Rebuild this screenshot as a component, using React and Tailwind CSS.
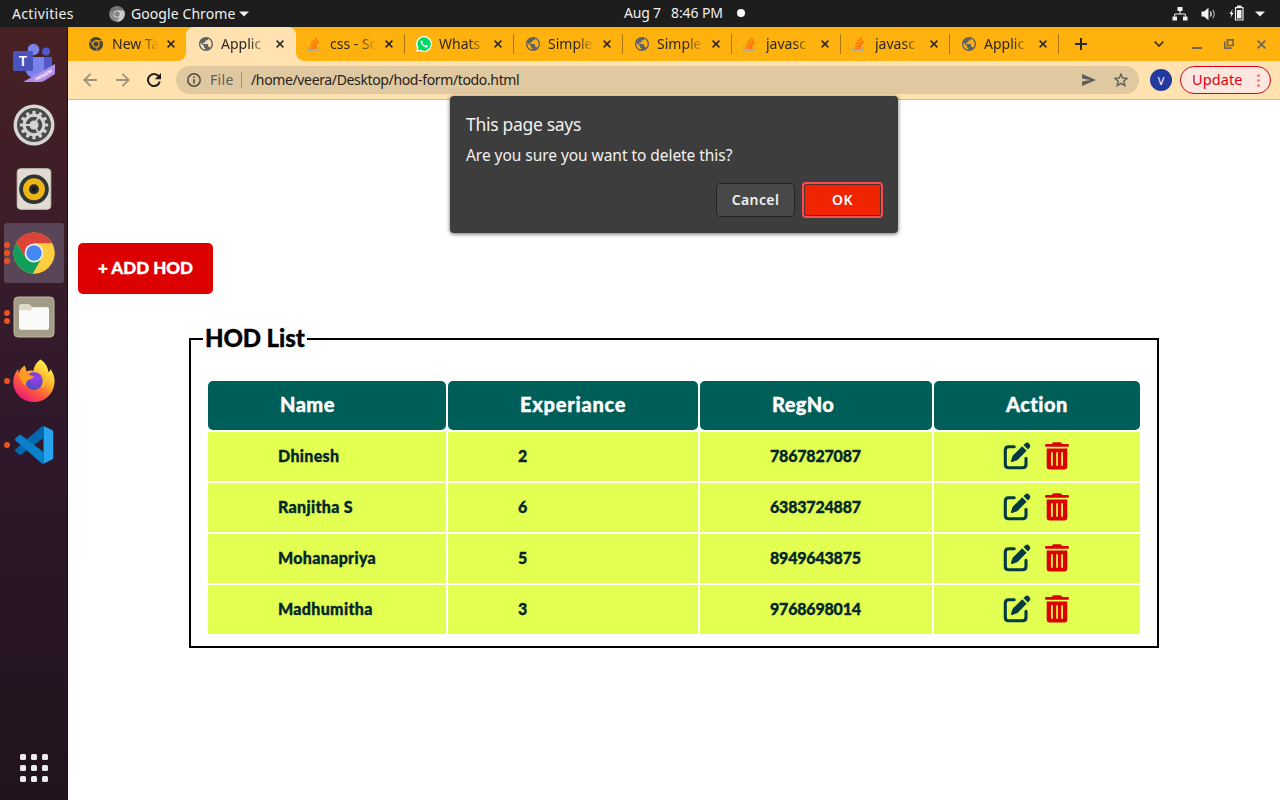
import React from "react";

const UI = "font-['Noto_Sans',sans-serif]";
const HEAVY = "font-['Lato',sans-serif] font-black [font-variant-ligatures:none] [-webkit-text-stroke:0.35px_currentColor]";

/* ---------- small icons ---------- */

function GlobeIcon() {
  return (
    <svg width="14" height="14" viewBox="2 2 20 20" className="block shrink-0">
      <path d="M12 2C6.48 2 2 6.48 2 12s4.48 10 10 10 10-4.48 10-10S17.52 2 12 2zm-1 17.93c-3.95-.49-7-3.85-7-7.93 0-.62.08-1.21.21-1.79L9 15v1c0 1.1.9 2 2 2v1.93zm6.9-2.54c-.26-.81-1-1.39-1.9-1.39h-1v-3c0-.55-.45-1-1-1H8v-2h2c.55 0 1-.45 1-1V7h2c1.1 0 2-.9 2-2v-.41c2.93 1.19 5 4.06 5 7.41 0 2.08-.8 3.97-2.1 5.39z" fill="#5f6368" />
    </svg>
  );
}

function ChromeMono({ size, outer, inner, gap }) {
  return (
    <svg width={size} height={size} viewBox="0 0 16 16" className="block shrink-0">
      <circle cx="8" cy="8" r="8" fill={outer} />
      <circle cx="8" cy="8" r="4.2" fill={gap} />
      <circle cx="8" cy="8" r="2.9" fill={inner} />
      <path d="M8 4.2 H15.2 M4.7 9.9 L1.1 3.7 M11.3 9.9 L7.7 16" stroke={gap} strokeWidth="1" fill="none" />
    </svg>
  );
}

function ChromeGrey() {
  return (
    <svg width="16" height="16" viewBox="0 0 16 16" className="block shrink-0">
      <circle cx="8" cy="8" r="7.8" fill="#8b8b8b" />
      <path d="M1.2 4.2 A7.8 7.8 0 0 1 14.9 4.4 H8 L4.8 9.8 Z" fill="#757575" />
      <path d="M14.9 4.4 A7.8 7.8 0 0 1 7.6 15.8 L11.1 9.9 L8 4.4 Z" fill="#c9c9c9" />
      <circle cx="8" cy="8" r="3.6" fill="#e2e2e2" />
      <circle cx="8" cy="8" r="2.8" fill="#858585" />
    </svg>
  );
}

function StackIcon() {
  return (
    <svg width="14" height="16" viewBox="0 0 14 16" className="block shrink-0">
      <path d="M1 10.5 V14.3 H10.8 V10.5" fill="none" stroke="#b5a68e" strokeWidth="1.3" />
      <path d="M2.8 12.2 H9.2 M3 9.6 L9.3 10.9 M3.9 6.7 L9.7 9.4 M5.6 4 L10.5 8.1 M8 1.8 L11.6 7" fill="none" stroke="#ff6a0a" strokeWidth="1.3" />
    </svg>
  );
}

function WhatsIcon() {
  return (
    <svg width="16" height="16" viewBox="0 0 16 16" className="block shrink-0">
      <path d="M8 0 a8 8 0 1 1 -3.7 15.1 L0 16 L1 11.9 A8 8 0 0 1 8 0 Z" fill="#fff" />
      <path d="M8 1.3 a6.7 6.7 0 1 1 -3.4 12.4 L1.9 14.3 L2.6 11.7 A6.7 6.7 0 0 1 8 1.3 Z" fill="#00d95f" />
      <path d="M5.5 4.2 C4.2 4.6 4.1 6.3 5.6 8.3 C7.4 10.8 9.6 12 11.1 11.2 C12 10.7 12 9.8 11.8 9.6 L10.1 8.8 L9.2 9.8 C8 9.4 6.9 8.4 6.3 7.2 L6.9 6.3 L6.2 4.5 Z" fill="#fff" />
    </svg>
  );
}

function Cross({ size = 8, color = "#282828" }) {
  return (
    <svg width={size} height={size} viewBox="0 0 8 8" className="block shrink-0">
      <path d="M0.6 0.6 L7.4 7.4 M7.4 0.6 L0.6 7.4" stroke={color} strokeWidth="1.5" />
    </svg>
  );
}

function EditIcon() {
  return (
    <svg width="28" height="28" viewBox="0 0 28 28" className="block">
      <path d="M11.2 4.8 H5.6 Q2.3 4.8 2.3 8.2 V22.2 Q2.3 25.8 5.6 25.8 H19.6 Q23 25.8 23 22.2 V16.2" fill="none" stroke="#023b43" strokeWidth="3.1" strokeLinecap="round" />
      <path d="M19.2 4.2 L23.6 8.8 L15 17.4 Q14.2 18.2 13.2 18.6 L9.2 20 Q7.5 20.4 8 18.7 L9.4 14.6 Q9.8 13.5 10.6 12.8 Z" fill="#023b43" />
      <path d="M20.5 3 L22.2 1.4 Q24.2 -0.3 26.2 1.7 Q28.1 3.8 26.5 5.7 L24.8 7.5 Z" fill="#023b43" />
    </svg>
  );
}

function TrashIcon() {
  return (
    <svg width="24" height="28" viewBox="0 0 24 28" className="block">
      <path d="M1.3 2 H6.6 L7.6 0.9 Q8 0.3 8.8 0.3 H15.2 Q16 0.3 16.4 0.9 L17.4 2 H22.7 Q24 2 24 3.4 Q24 4.8 22.7 4.8 H1.3 Q0 4.8 0 3.4 Q0 2 1.3 2 Z" fill="#dc0000" />
      <path fillRule="evenodd" d="M1.7 6.6 H22.3 V24.6 Q22.3 27.5 19.4 27.5 H4.6 Q1.7 27.5 1.7 24.6 Z M6.1 10.2 V23.8 H7.8 V10.2 Z M11.2 10.2 V23.8 H12.9 V10.2 Z M16.2 10.2 V23.8 H17.9 V10.2 Z" fill="#dc0000" />
    </svg>
  );
}

/* ---------- dock icons ---------- */

function TeamsIcon() {
  return (
    <svg width="42" height="42" viewBox="0 0 42 42">
      <circle cx="20.5" cy="9.5" r="5.8" fill="#7b83eb" />
      <circle cx="33" cy="11.5" r="4" fill="#5059c9" />
      <path d="M28 17 H39 V28 Q37 34 30 33 Z" fill="#5059c9" />
      <path d="M12 17 H31 V30 Q29 38 20 38 Q13 36 12 28 Z" fill="#7b83eb" />
      <rect x="0" y="11" width="20" height="20" rx="1.8" fill="#4b53bc" />
      <text x="10" y="26.3" textAnchor="middle" fontFamily="Noto Sans, sans-serif" fontWeight="600" fontSize="14.5" fill="#fff">T</text>
      <path d="M10 42 L42 24 V34 L31 41 Q29 42 26 42 Z" fill="#b18fe8" />
      <text x="0" y="0" transform="translate(23.5 41) rotate(-30)" fontFamily="Noto Sans, sans-serif" fontWeight="700" fontSize="4.2" fill="#fff">PREVIEW</text>
    </svg>
  );
}

const teeth = Array.from({ length: 12 }, (_, i) => i * 30);

function SettingsIcon() {
  return (
    <svg width="42" height="42" viewBox="0 0 42 42">
      <circle cx="21" cy="21" r="20.5" fill="#d6d6d4" />
      <circle cx="21" cy="21" r="17" fill="#4a4a49" />
      {teeth.map((a) => (
        <rect key={a} x="19.4" y="6.8" width="3.2" height="5" rx="0.8" fill="#d4d4d2" transform={`rotate(${a} 21 21)`} />
      ))}
      <circle cx="21" cy="21" r="9.8" fill="none" stroke="#d4d4d2" strokeWidth="3" />
      <circle cx="21" cy="21" r="4.6" fill="#d4d4d2" />
      <path d="M21 21 L11.5 21 M21 21 L25.8 12.8 M21 21 L25.8 29.2" stroke="#d4d4d2" strokeWidth="1.8" />
    </svg>
  );
}

function RhythmboxIcon() {
  return (
    <svg width="42" height="42" viewBox="0 0 42 42">
      <rect x="4.2" y="0.7" width="33.6" height="40.6" rx="3.5" fill="#e0dcd1" stroke="#c8c3b7" />
      <circle cx="21" cy="21.2" r="14.8" fill="#2e3536" />
      <circle cx="21" cy="21.2" r="11" fill="#eeb514" />
      <circle cx="21" cy="21.2" r="5" fill="#2b2d2d" />
      <circle cx="21" cy="21.2" r="2.2" fill="#161616" />
    </svg>
  );
}

function ChromeIcon() {
  return (
    <svg width="42" height="42" viewBox="0 0 42 42">
      <circle cx="21" cy="21" r="20.5" fill="#ffcd40" />
      <path d="M3.2 10.8 A20.5 20.5 0 0 1 39.2 11.6 H21 L12.5 25.5 Z" fill="#dc4437" />
      <path d="M3.2 10.8 A20.5 20.5 0 0 0 20 41.4 L28.8 26 L20 21 L12.6 25.6 Z" fill="#119e5a" />
      <path d="M39.2 11.6 A20.5 20.5 0 0 1 20 41.5 L29.2 25.5 L21 11.6 Z" fill="#ffcd40" />
      <circle cx="21" cy="21" r="9.4" fill="#f1f1f1" />
      <circle cx="21" cy="21" r="7.7" fill="#4688f1" />
    </svg>
  );
}

function FilesIcon() {
  return (
    <svg width="42" height="42" viewBox="0 0 42 42">
      <rect x="1" y="1" width="40" height="40" rx="4" fill="#a39c87" stroke="#c0b9a5" strokeWidth="1" />
      <path d="M6 10.2 Q6 8 8.2 8 H15 Q17 8 18 9.6 L19.2 11.2 H34 Q36 11.2 36 13.2 V31.5 Q36 34 33.5 34 H8.5 Q6 34 6 31.5 Z" fill="#ded8c8" />
      <path d="M6 14.2 H17 Q19 14 20 11.2 H34 Q36 11.2 36 13.2 V31 Q36 33.5 33.5 33.5 H8.5 Q6 33.5 6 31 Z" fill="#fafaf8" />
    </svg>
  );
}

function FirefoxIcon() {
  return (
    <svg width="42" height="44" viewBox="0 0 42 44">
      <defs>
        <linearGradient id="ffBody" x1="0.85" y1="0.1" x2="0.25" y2="1">
          <stop offset="0" stopColor="#fff34f" />
          <stop offset="0.35" stopColor="#ffb52b" />
          <stop offset="0.65" stopColor="#ff5a3a" />
          <stop offset="1" stopColor="#e8167c" />
        </linearGradient>
        <radialGradient id="ffGlobe" cx="0.6" cy="0.35" r="0.7">
          <stop offset="0" stopColor="#a03cf0" />
          <stop offset="1" stopColor="#4650b8" />
        </radialGradient>
      </defs>
      <path d="M27.5 0.5 C33 4 35 9 35.5 13 C37 12.5 37.4 11 37.4 10 C41 15 42 20 41.5 24 C40.5 36 31 43 21 43 C9 43 0 34 0.3 22.5 C0.5 17 3 12.5 5.2 10 L5.6 14.2 C6.8 10.6 9.5 7.6 11.8 6.5 L13.6 12.6 C16 11.4 18.6 11.2 20.6 12 C20.6 7.2 23.8 3 27.5 0.5 Z" fill="url(#ffBody)" />
      <circle cx="21" cy="22" r="9" fill="url(#ffGlobe)" />
      <path d="M5.6 14.2 L13 13 C14.6 15.4 17.5 16.6 20.7 17.2 C20.7 19 18 20 15.4 21 C13.4 22 12.6 24 13.2 27 C8 24.6 7 18.5 5.6 14.2 Z" fill="#ff9a24" />
      <path d="M26 13 C30 17 31 24 28 29 C35 26 34.5 17 26 13 Z" fill="#ffb52b" />
    </svg>
  );
}

function CodeIcon() {
  return (
    <svg width="42" height="42" viewBox="0 0 42 42">
      <path d="M30.5 2 L39 6 Q40.2 6.6 40.2 8 V33.5 Q40.2 35 39 35.5 L30.5 39.8 Z" fill="#27a4ee" />
      <path d="M30.5 2 V14 L8 30.7 Q7 31.4 6 30.6 L2.4 27.5 Q1.4 26.4 2.4 25.4 L28.5 2.6 Q29.6 1.7 30.5 2 Z" fill="#0068ad" />
      <path d="M30.5 39.8 V28 L8 11 Q7 10.4 6 11.2 L2.4 14.4 Q1.4 15.4 2.4 16.4 L28.5 39.2 Q29.6 40.2 30.5 39.8 Z" fill="#0a7fca" />
    </svg>
  );
}

const dock = [
  { Icon: TeamsIcon, dots: 0 },
  { Icon: SettingsIcon, dots: 0 },
  { Icon: RhythmboxIcon, dots: 0 },
  { Icon: ChromeIcon, dots: 3, active: true },
  { Icon: FilesIcon, dots: 2 },
  { Icon: FirefoxIcon, dots: 1 },
  { Icon: CodeIcon, dots: 1 },
];

function Dock() {
  return (
    <aside className="flex w-[68px] shrink-0 flex-col justify-between border-r border-[#1c0e18] bg-linear-to-b from-[#482124] via-[#30182c] via-50% to-[#21141d] pt-1 pb-[18px]">
      <div className="flex flex-col gap-1 pl-1">
        {dock.map(({ Icon, dots, active }, i) => (
          <div key={i} className={`relative flex h-15 w-15 items-center justify-center rounded-[3px] ${active ? "bg-[#5a4457]" : ""}`}>
            <div className="absolute inset-y-0 left-0 flex flex-col items-center justify-center gap-[2px]">
              {Array.from({ length: dots }, (_, d) => (
                <span key={d} className="size-[6px] rounded-full bg-[#e95420]" />
              ))}
            </div>
            <Icon />
          </div>
        ))}
      </div>
      <div className="grid w-[28px] grid-cols-3 gap-[5px] self-center">
        {Array.from({ length: 9 }, (_, d) => (
          <span key={d} className="size-[6px] rounded-[1.5px] bg-[#ececec]" />
        ))}
      </div>
    </aside>
  );
}

/* ---------- desktop top bar ---------- */

function TopBar() {
  return (
    <header className="relative flex h-[27px] shrink-0 items-center justify-between bg-[#1d1d1d] text-[14px] leading-[26px] text-[#f0f0f0]">
      <div className="flex items-center pl-3">
        <span className="w-[97px] whitespace-nowrap tracking-[0.35px]">Activities</span>
        <ChromeGrey />
        <span className="ml-1.5 whitespace-nowrap tracking-[0.08px]">Google Chrome</span>
        <svg width="10" height="6" viewBox="0 0 10 6" className="ml-1"><path d="M0 0.5 H10 L5 5.5 Z" fill="#f0f0f0" /></svg>
      </div>
      <div className="absolute left-[624px] top-0 flex h-[26px] items-center whitespace-nowrap">
        <span className="w-[47px] tracking-[-0.2px]">Aug 7</span>
        <span className="w-[66px] tracking-[-0.1px]">8:46 PM</span>
        <span className="size-2 rounded-full bg-white" />
      </div>
      <div className="flex items-center pr-[15px]">
        <svg width="16" height="14" viewBox="0 0 16 14">
          <path d="M5.5 0 H10.5 V4 H5.5 Z M0.5 9.5 H5 V13.5 H0.5 Z M11 9.5 H15.5 V13.5 H11 Z" fill="#f0f0f0" />
          <path d="M8 4 V7 M2.7 9.5 V7 H13.3 V9.5" fill="none" stroke="#f0f0f0" />
        </svg>
        <svg width="16" height="14" viewBox="0 0 16 14" className="ml-[13px]">
          <path d="M0.5 4.5 H3 L7.5 0.8 V13.2 L3 9.5 H0.5 Z" fill="#f0f0f0" />
          <path d="M9.3 4.5 Q11 7 9.3 9.5" fill="none" stroke="#f0f0f0" strokeWidth="1.2" />
          <path d="M11.7 2.8 Q14.8 7 11.7 11.2" fill="none" stroke="#a8a8a8" strokeWidth="1.2" />
        </svg>
        <svg width="16" height="16" viewBox="0 0 16 16" className="ml-[12px] mb-[2px]">
          <path d="M3.8 4 L0.4 9 H2.3 L1.5 13 L4.6 7.8 H2.8 Z" fill="#f0f0f0" />
          <path d="M6.5 2.7 H14 V15 H6.5 Z" fill="none" stroke="#f0f0f0" strokeWidth="1.2" />
          <path d="M8 5 H12.5 V13.4 H8 Z M8 0.6 H12.5 V2.4 H8 Z" fill="#f0f0f0" />
        </svg>
        <svg width="10" height="6" viewBox="0 0 10 6" className="ml-[10px]"><path d="M0 0.5 H10 L5 5.5 Z" fill="#f0f0f0" /></svg>
      </div>
    </header>
  );
}

/* ---------- browser ---------- */

const tabs = [
  { title: "New Ta", icon: "chrome" },
  { title: "Applic", icon: "globe", active: true },
  { title: "css - Sc", icon: "stack" },
  { title: "Whats", icon: "whats", sep: true },
  { title: "Simple", icon: "globe", sep: true },
  { title: "Simple", icon: "globe", sep: true },
  { title: "javasc", icon: "stack", sep: true },
  { title: "javasc", icon: "stack", sep: true },
  { title: "Applic", icon: "globe", sep: true },
];

function TabIcon({ name }) {
  if (name === "chrome") return <ChromeMono size={14} outer="#45453f" inner="#45453f" gap="#f2a90e" />;
  if (name === "stack") return <StackIcon />;
  if (name === "whats") return <WhatsIcon />;
  return <span className="pl-px"><GlobeIcon /></span>;
}

function Tab({ tab }) {
  return (
    <div className={`relative flex h-full shrink-0 items-center pl-3 ${tab.active ? "-mr-px w-[110px] rounded-t-lg bg-[#ffe2b0]" : "w-[109px]"}`}>
      {tab.sep && <span className="absolute left-0 top-[7px] h-5 w-px bg-[#a8770f]" />}
      {tab.active && (
        <>
          <span className="absolute -left-2 bottom-0 size-2 bg-[radial-gradient(circle_at_0_0,transparent_7.5px,#ffe2b0_8px)]" />
          <span className="absolute -right-2 bottom-0 size-2 bg-[radial-gradient(circle_at_100%_0,transparent_7.5px,#ffe2b0_8px)]" />
        </>
      )}
      <span className="flex w-[23px] items-center"><TabIcon name={tab.icon} /></span>
      <span className="w-[48px] whitespace-nowrap text-[14px] leading-5 text-[#2b2820] mask-[linear-gradient(to_right,black_60%,transparent_97%)]">
        {tab.title}
      </span>
      <span className="ml-[7px]"><Cross /></span>
    </div>
  );
}

function TabStrip() {
  return (
    <div className="flex h-[34px] shrink-0 items-center bg-[#ffb10d] pl-[9px]">
      {tabs.map((t, i) => <Tab key={i} tab={t} />)}
      <div className="relative flex flex-1 items-center">
        <span className="absolute left-0 top-[-4px] h-5 w-px bg-[#a8770f]" />
        <svg width="12" height="12" viewBox="0 0 12 12" className="ml-[17px]"><path d="M6 0 V12 M0 6 H12" stroke="#282828" strokeWidth="2" /></svg>
        <svg width="10" height="6" viewBox="0 0 10 6" className="ml-[67px]"><path d="M0.7 0.7 L5 5 L9.3 0.7" fill="none" stroke="#3d3420" strokeWidth="1.7" /></svg>
        <svg width="10" height="10" viewBox="0 0 10 10" className="ml-[28px]"><path d="M0 9 H10" stroke="#6d6659" strokeWidth="2" /></svg>
        <svg width="10" height="10" viewBox="0 0 10 10" className="ml-[22px]"><path d="M3.5 0.8 H9.2 V6.5 H3.5 Z M0.8 2.5 V9.2 H7.5" fill="none" stroke="#6d6659" strokeWidth="1.7" /></svg>
        <span className="ml-[23px]"><Cross size={9} color="#6d6659" /></span>
      </div>
    </div>
  );
}

function Toolbar() {
  return (
    <div className="flex h-[39px] shrink-0 items-center border-b border-[#cfbb96] bg-[#ffe2b0] pl-[15px] pr-[9px]">
      <svg width="14" height="14" viewBox="0 0 14 14"><path d="M14 7 H1.5 M7.5 0.8 L1.3 7 L7.5 13.2" fill="none" stroke="#9f927c" strokeWidth="1.8" /></svg>
      <svg width="14" height="14" viewBox="0 0 14 14" className="ml-[19px]"><path d="M0 7 H12.5 M6.5 0.8 L12.7 7 L6.5 13.2" fill="none" stroke="#9f927c" strokeWidth="1.8" /></svg>
      <svg width="14" height="14" viewBox="0 0 14 14" className="ml-[17px]">
        <path d="M11.6 3.2 A6 6 0 1 0 12.8 8.6" fill="none" stroke="#1f1f1f" strokeWidth="2" />
        <path d="M14 0 V6.2 H7.8 Z" fill="#1f1f1f" />
      </svg>
      <div className="ml-[15px] flex h-7 w-[963px] items-center rounded-full bg-[#e0c9a0] px-[11px] text-[14px]">
        <svg width="14" height="14" viewBox="0 0 14 14">
          <circle cx="7" cy="7" r="6.2" fill="none" stroke="#4f4a42" strokeWidth="1.5" />
          <path d="M7 6.2 V10.4 M7 3.4 V4.9" stroke="#4f4a42" strokeWidth="1.6" />
        </svg>
        <span className="ml-[9px] w-[31px] whitespace-nowrap pb-[2px] tracking-[0.3px] text-[#5f6062]">File</span>
        <span className="h-4 w-px bg-[#a39273]" />
        <span className="ml-[9px] flex-1 whitespace-nowrap pb-[2px] tracking-[-0.36px] text-[#24211c]">/home/veera/Desktop/hod-form/todo.html</span>
        <svg width="14" height="12" viewBox="0 0 14 12"><path d="M0 0 L14 6 L0 12 V7.4 L8 6 L0 4.6 Z" fill="#5f5f60" /></svg>
        <svg width="14" height="14" viewBox="0 0 14 14" className="ml-[18px]"><path d="M7 1.2 L8.7 5 L13 5.4 L9.8 8.2 L10.8 12.5 L7 10.3 L3.2 12.5 L4.2 8.2 L1 5.4 L5.3 5 Z" fill="none" stroke="#5f5f60" strokeWidth="1.4" /></svg>
      </div>
      <span className="ml-[11px] flex size-[22px] items-center justify-center rounded-full bg-[#2439a0] text-[11px] leading-none text-white">V</span>
      <div className="ml-2 flex h-7 w-[91px] items-center justify-between rounded-full border border-[#dc0018] bg-[#fde7df] pl-[11px] pr-[10px] text-[14.5px] text-[#dc0018]">
        <span className="pb-px tracking-[0.1px]">Update</span>
        <span className="flex flex-col gap-[2px]">
          <span className="size-[3px] rounded-full bg-[#f47d7d]" />
          <span className="size-[3px] rounded-full bg-[#f47d7d]" />
          <span className="size-[3px] rounded-full bg-[#f47d7d]" />
        </span>
      </div>
    </div>
  );
}

function AlertDialog() {
  return (
    <div className="absolute left-[382px] top-[69px] flex h-[137px] w-[448px] flex-col rounded-[4px] bg-[#3d3d3d] px-4 pt-[16px] text-[#f1f1f1] shadow-[0_1px_4px_rgba(0,0,0,0.6)]">
      <div className="text-[17.5px] leading-6 tracking-[-0.3px]">This page says</div>
      <div className="mt-[7px] text-[15.5px] leading-6 tracking-[-0.05px]">Are you sure you want to delete this?</div>
      <div className="mt-[15px] mr-[-1px] flex items-center justify-end gap-[7px] text-[14px] font-semibold">
        <button className="h-[34px] w-[79px] rounded-[4px] border border-[#232323] bg-[#484848] pb-[2px] tracking-[0.4px]">Cancel</button>
        <div className="h-9 w-[81px] rounded-[4px] bg-[#fb4a52] p-[2px]">
          <button className="h-full w-full rounded-[2px] border border-[#523030] bg-[#f02500] pb-[2px] tracking-[0.4px] text-white">OK</button>
        </div>
      </div>
    </div>
  );
}

const heads = [
  ["Name", "tracking-[0.45px]"],
  ["Experiance", "tracking-[0.75px]"],
  ["RegNo", "tracking-[0.4px]"],
  ["Action", "tracking-[0.45px]"],
];

const rows = [
  ["Dhinesh", "2", "7867827087"],
  ["Ranjitha S", "6", "6383724887"],
  ["Mohanapriya", "5", "8949643875"],
  ["Madhumitha", "3", "9768698014"],
];

const cellTracking = ["tracking-[0.32px]", "tracking-normal", "tracking-[-0.2px]"];

function Page() {
  return (
    <main className={`flex flex-1 flex-col items-start bg-white pt-[143px] ${HEAVY}`}>
      <button className="ml-[10px] h-[51px] w-[135px] whitespace-nowrap rounded-[5px] bg-[#dc0000] pb-[2px] text-[17px] text-white">+ ADD HOD</button>
      <fieldset className="ml-[121px] mt-[29px] h-[325px] w-[970px] border-2 border-black px-[17px] pt-[26px]">
        <legend className="-ml-[5px] px-[2px] pb-[2px] text-[24px] leading-[30px] tracking-[-0.1px] text-black"><span className="block w-[100px] whitespace-nowrap">HOD List</span></legend>
        <div className="grid grid-cols-[238px_250px_232px_206px] gap-[2px]">
          {heads.map(([h, tracking]) => (
            <div key={h} className={`flex h-[49px] items-center rounded-[5px] bg-[#005e59] pl-[72px] pb-[4px] text-[20px] text-white ${tracking}`}>{h}</div>
          ))}
          {rows.map((r) => (
            <React.Fragment key={r[0]}>
              {r.map((c, i) => (
                <div key={c} className={`flex h-[49px] items-center bg-[#e3ff52] pl-[70px] pb-[2px] text-[16px] text-[#03272a] ${cellTracking[i]}`}>{c}</div>
              ))}
              <div className="flex h-[49px] items-center gap-[14px] bg-[#e3ff52] pl-[69px] pb-px">
                <EditIcon />
                <TrashIcon />
              </div>
            </React.Fragment>
          ))}
        </div>
      </fieldset>
    </main>
  );
}

export default function App() {
  return (
    <div className={`flex h-[800px] w-[1280px] flex-col overflow-hidden ${UI}`}>
      <TopBar />
      <div className="flex min-h-0 flex-1">
        <Dock />
        <div className="relative flex min-w-0 flex-1 flex-col">
          <TabStrip />
          <Toolbar />
          <Page />
          <AlertDialog />
        </div>
      </div>
    </div>
  );
}
